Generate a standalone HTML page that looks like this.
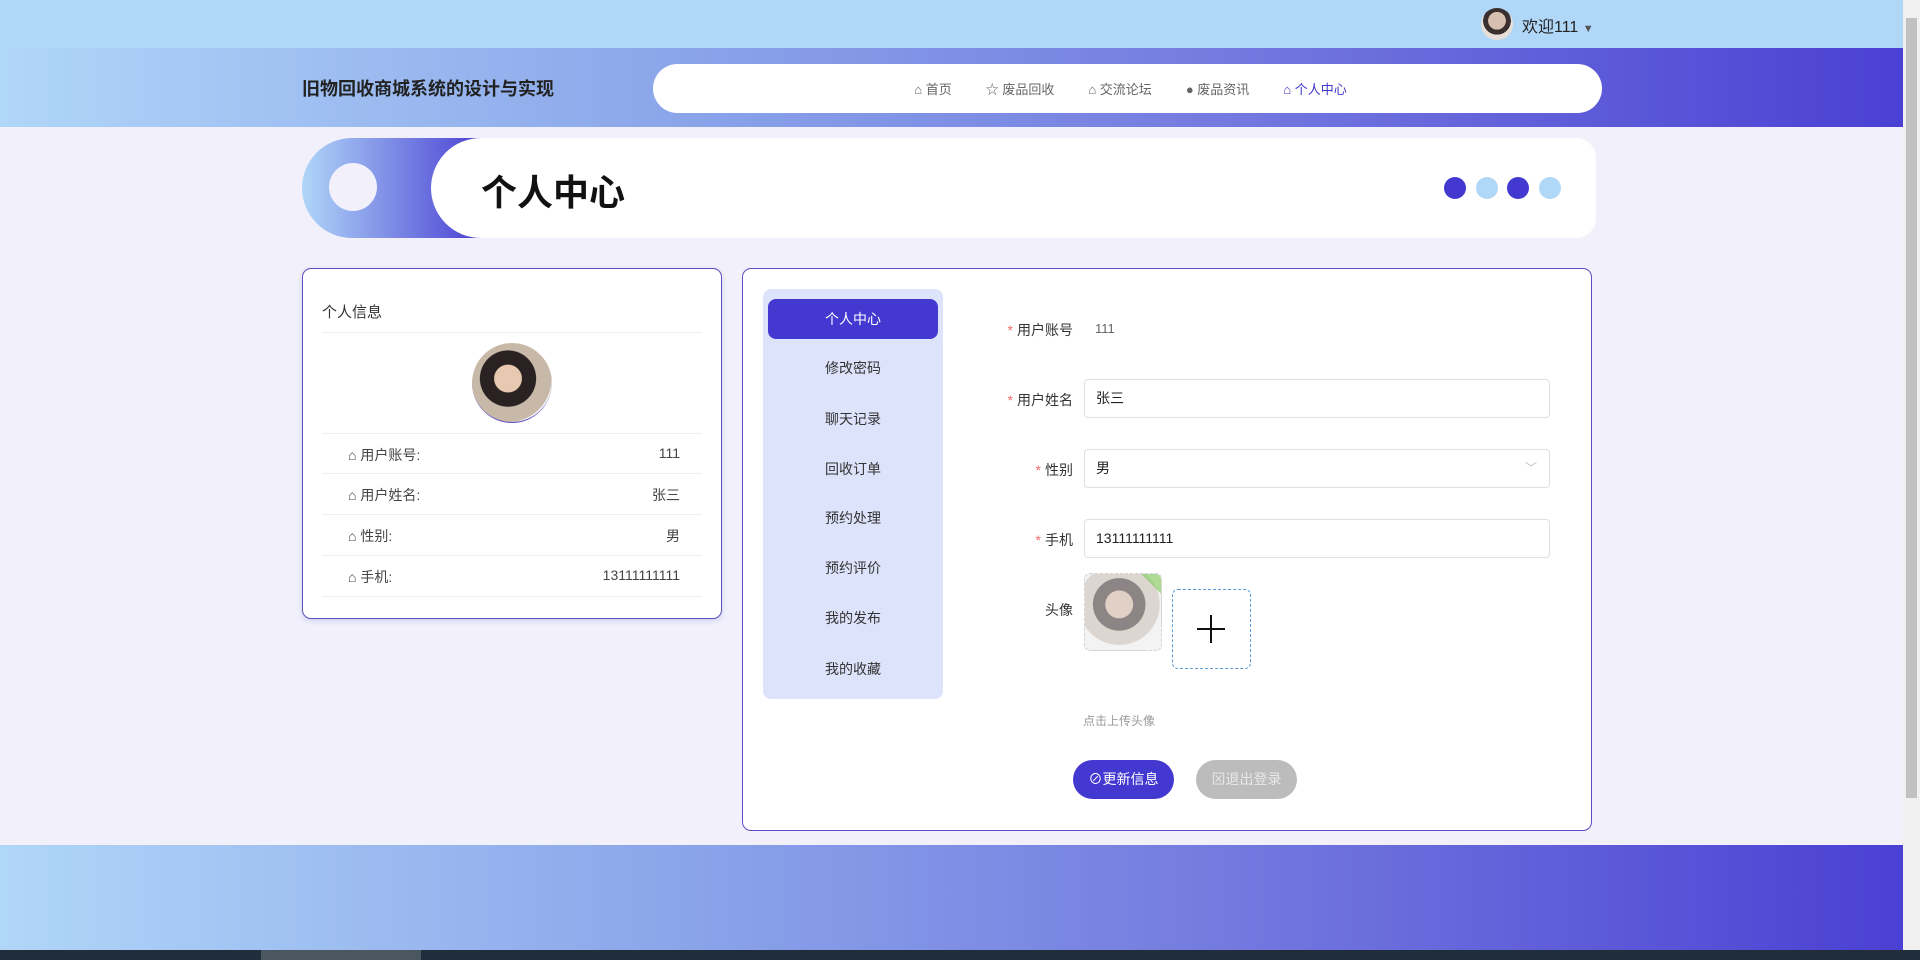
<!DOCTYPE html>
<html><head><meta charset="utf-8"><style>
*{box-sizing:border-box;margin:0;padding:0}
body{width:1920px;height:960px;overflow:hidden;font-family:"Liberation Sans","Noto Sans CJK SC",sans-serif;background:#f2f1fb;position:relative;color:#333}
.a{position:absolute}
.grad{background:linear-gradient(90deg,#b0d6f8 0%,#8ba6ea 35%,#7379df 65%,#4a40d3 100%)}
.navi{display:inline-flex;align-items:center;gap:4px;font-size:13px;color:#666;margin:0 17px}
.row{position:absolute;left:322px;width:380px;height:41px;border-bottom:1px solid #eee;font-size:14px;color:#444}
.row span{position:absolute;top:11px}
.menu{position:absolute;left:768px;width:170px;height:40px;line-height:40px;text-align:center;font-size:14px;color:#333}
.lbl{position:absolute;right:847px;font-size:14px;color:#333;text-align:right}
.lbl b{color:#f56c6c;font-weight:normal;margin-right:4px}
.inp{position:absolute;left:1084px;width:466px;height:39px;border:1px solid #dcdfe6;border-radius:4px;background:#fff;font-size:14px;padding-left:11px;line-height:37px;color:#222}
</style></head><body>
<div class="a" style="left:0;top:0;width:1903px;height:48px;background:#b1d7f8"></div>
<div class="a" style="left:1481px;top:8px;width:32px;height:32px;border-radius:50%;background:radial-gradient(circle at 50% 40%,#d8c0b0 0 35%,#3a3030 36% 55%,#e8e0d8 56%)"></div>
<div class="a" style="left:1522px;top:13px;font-size:16px;color:#222">欢迎111 <span style="font-size:11px;color:#555">▼</span></div>
<div class="a grad" style="left:0;top:48px;width:1903px;height:79px"></div>
<div class="a" style="left:302px;top:75px;font-size:18px;font-weight:bold;color:#222">旧物回收商城系统的设计与实现</div>
<div class="a" style="left:653px;top:64px;width:949px;height:49px;background:#fff;border-radius:25px;display:flex;align-items:center;justify-content:center;padding-left:6px">
<span class="navi">⌂ 首页</span><span class="navi">☆ 废品回收</span><span class="navi">⌂ 交流论坛</span><span class="navi">● 废品资讯</span><span class="navi" style="color:#3f36c9">⌂ 个人中心</span></div>
<div class="a" style="left:302px;top:138px;width:180px;height:100px;border-radius:50px 0 0 50px;background:linear-gradient(90deg,#b0d6f8,#4a40d3)"></div>
<div class="a" style="left:329px;top:163px;width:48px;height:48px;border-radius:50%;background:#f2f1fb"></div>
<div class="a" style="left:431px;top:138px;width:1165px;height:100px;border-radius:50px 20px 20px 50px;background:#fff"></div>
<div class="a" style="left:481px;top:164px;font-size:36px;font-weight:bold;color:#111">个人中心</div>
<div class="a" style="left:1444px;top:177px;width:22px;height:22px;border-radius:50%;background:#4338d0"></div>
<div class="a" style="left:1476px;top:177px;width:22px;height:22px;border-radius:50%;background:#b1d7f8"></div>
<div class="a" style="left:1507px;top:177px;width:22px;height:22px;border-radius:50%;background:#4338d0"></div>
<div class="a" style="left:1539px;top:177px;width:22px;height:22px;border-radius:50%;background:#b1d7f8"></div>

<div class="a" style="left:302px;top:268px;width:420px;height:351px;background:#fff;border:1px solid #5a4fc0;border-radius:9px;box-shadow:0 2px 6px rgba(80,70,190,.2)"></div>
<div class="a" style="left:322px;top:301px;font-size:15px;color:#333">个人信息</div>
<div class="a" style="left:322px;top:332px;width:380px;border-top:1px solid #eee"></div>
<div class="a" style="left:472px;top:343px;width:80px;height:80px;border-radius:50%;background:radial-gradient(circle at 45% 45%,#e8c8b0 0 22%,#2a2222 23% 45%,#c8b8a8 46% 70%,#f0f0f0 71%);border-bottom:1px solid #5a4fc0"></div>
<div class="row" style="top:433px;border-top:1px solid #eee"><span style="left:26px">⌂ 用户账号:</span><span style="right:22px">111</span></div>
<div class="row" style="top:474px"><span style="left:26px">⌂ 用户姓名:</span><span style="right:22px">张三</span></div>
<div class="row" style="top:515px"><span style="left:26px">⌂ 性别:</span><span style="right:22px">男</span></div>
<div class="row" style="top:556px"><span style="left:26px">⌂ 手机:</span><span style="right:22px">13111111111</span></div>

<div class="a" style="left:742px;top:268px;width:850px;height:563px;background:#fff;border:1px solid #5a4fc0;border-radius:9px"></div>
<div class="a" style="left:763px;top:289px;width:180px;height:410px;background:#dde3fb;border-radius:8px"></div>
<div class="menu" style="top:299px;background:#4338d0;color:#fff;border-radius:8px">个人中心</div>
<div class="menu" style="top:348px">修改密码</div>
<div class="menu" style="top:399px">聊天记录</div>
<div class="menu" style="top:449px">回收订单</div>
<div class="menu" style="top:498px">预约处理</div>
<div class="menu" style="top:548px">预约评价</div>
<div class="menu" style="top:598px">我的发布</div>
<div class="menu" style="top:649px">我的收藏</div>

<div class="lbl" style="top:320px"><b>*</b>用户账号</div>
<div class="a" style="left:1095px;top:321px;font-size:13px;color:#666">111</div>
<div class="lbl" style="top:390px"><b>*</b>用户姓名</div>
<div class="inp" style="top:379px">张三</div>
<div class="lbl" style="top:460px"><b>*</b>性别</div>
<div class="inp" style="top:449px">男<span style="position:absolute;right:12px;color:#bbb;font-size:12px">﹀</span></div>
<div class="lbl" style="top:530px"><b>*</b>手机</div>
<div class="inp" style="top:519px">13111111111</div>
<div class="lbl" style="top:600px">头像</div>
<div class="a" style="left:1084px;top:573px;width:78px;height:78px;border-radius:6px;border:1px dashed #ccc;background:radial-gradient(circle at 45% 40%,#dcc8bc 0 22%,#7a7070 23% 42%,#d8d0c8 43% 65%,#f2f2f2 66%);opacity:.85;overflow:hidden"><div style="position:absolute;right:-14px;top:-14px;width:28px;height:28px;background:#67c23a;transform:rotate(45deg);opacity:.6"></div></div>
<div class="a" style="left:1172px;top:589px;width:79px;height:80px;border:1px dashed #5b9bd5;border-radius:6px;background:#fff"></div>
<div class="a" style="left:1197px;top:628px;width:28px;height:2px;background:#111"></div>
<div class="a" style="left:1210px;top:615px;width:2px;height:28px;background:#111"></div>
<div class="a" style="left:1083px;top:712px;font-size:12px;color:#999">点击上传头像</div>
<div class="a" style="left:1073px;top:760px;width:101px;height:39px;border-radius:20px;background:#4338d0;color:#fff;font-size:14px;line-height:39px;text-align:center">⊘更新信息</div>
<div class="a" style="left:1196px;top:760px;width:101px;height:39px;border-radius:20px;background:#bcbcbc;color:#e8e8e8;font-size:14px;line-height:39px;text-align:center">⊠退出登录</div>

<div class="a grad" style="left:0;top:845px;width:1903px;height:105px"></div>
<div class="a" style="left:0;top:950px;width:1920px;height:10px;background:#1f2e3a"></div>
<div class="a" style="left:261px;top:950px;width:160px;height:10px;background:#4a5660"></div>
<div class="a" style="left:1903px;top:0;width:17px;height:950px;background:#f0f0f0"></div>
<div class="a" style="left:1906px;top:18px;width:11px;height:780px;background:#c1c1c1"></div>
</body></html>
